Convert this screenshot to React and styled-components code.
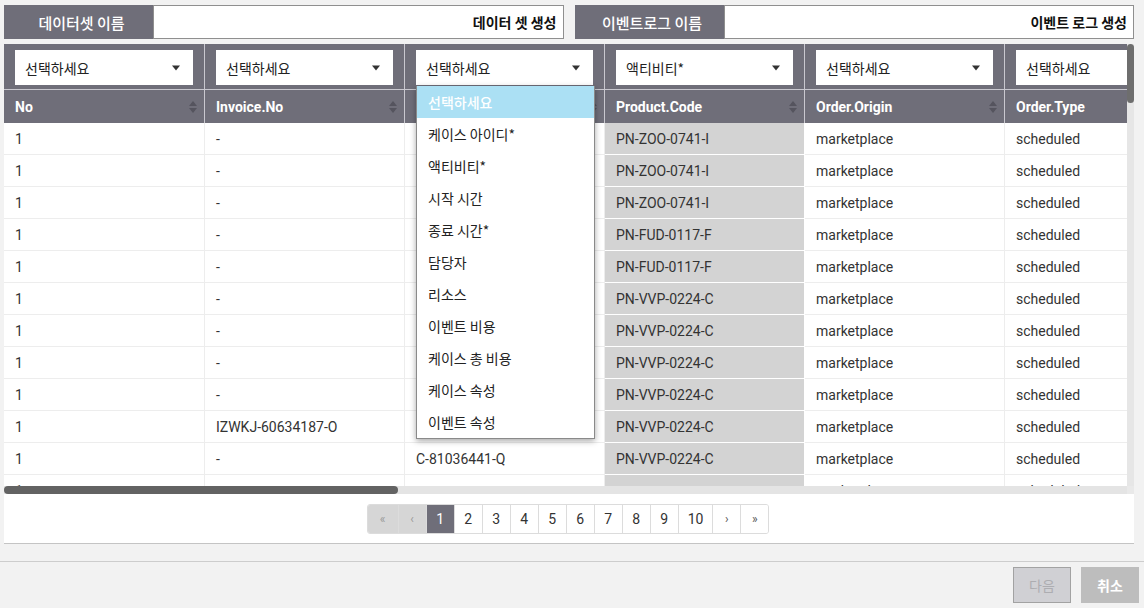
import React from 'react';
import styled, { createGlobalStyle } from 'styled-components';

const GlobalStyle = createGlobalStyle`
  html, body { margin: 0; padding: 0; background: #f2f2f2; }
  body { font-family: Roboto, "Noto Sans CJK KR", sans-serif; color: #333; }
  * { box-sizing: border-box; }
`;

const GRAY = '#6f6e79';

const Page = styled.div`
  min-height: 608px;
  background: #f2f2f2;
  display: flex;
  flex-direction: column;
`;

const Main = styled.div`
  padding: 5px 10px 0 4px;
`;

const TopBar = styled.div`
  display: flex;
  gap: 11px;
  height: 34px;
`;

const NameGroup = styled.div`
  flex: 1;
  display: flex;
`;

const NameLabel = styled.div`
  width: 149px;
  background: ${GRAY};
  color: #fff;
  font-family: "Noto Sans CJK KR", sans-serif;
  font-size: 15px;
  font-weight: 500;
  display: flex;
  align-items: center;
  justify-content: center;
  padding-left: 6px;
`;

const NameInput = styled.div`
  flex: 1;
  background: #fff;
  border: 1px solid #8f8f8f;
  display: flex;
  align-items: center;
  justify-content: flex-end;
  padding: 0 6px;
  font-family: "Noto Sans CJK KR", sans-serif;
  font-size: 14px;
  font-weight: 700;
  color: #111;
`;

const Panel = styled.div`
  margin-top: 5px;
  background: #fff;
  border-bottom: 1px solid #c4c4c4;
  height: 500px;
  display: flex;
  flex-direction: column;
`;

const TableFrame = styled.div`
  height: 450px;
  display: grid;
  grid-template-columns: minmax(0, 1fr) 7px;
  grid-template-rows: 442px 8px;
`;

const Viewport = styled.div`
  overflow: hidden;
  position: relative;
`;

const VTrack = styled.div`
  background: #e6e6e6;
  display: flex;
  flex-direction: column;
`;

const VThumb = styled.div`
  height: 59px;
  background: #6e6e6e;
  border-radius: 4px;
`;

const HTrack = styled.div`
  background: #e4e4e4;
  display: flex;
`;

const HThumb = styled.div`
  width: 394px;
  background: #636363;
  border-radius: 4px;
`;

const Corner = styled.div`
  background: #e9e9e9;
`;

const Table = styled.table`
  table-layout: fixed;
  border-collapse: separate;
  border-spacing: 0;
  width: ${p => p.$cols * 200 + 1}px;
`;

const FilterCell = styled.th`
  background: ${GRAY};
  height: 46px;
  padding: 6px 11px 0 11px;
  border-right: 1px solid #c9c8cf;
  border-bottom: 1px solid #c9c8cf;
  position: relative;
  vertical-align: top;
`;

const SelectBox = styled.div`
  height: 35px;
  background: #fff;
  display: flex;
  align-items: center;
  justify-content: space-between;
  padding: 0 13px 0 10px;
  font-family: "Noto Sans CJK KR", sans-serif;
  font-size: 14px;
  font-weight: 400;
  color: #222;
  text-align: left;
`;

const Dropdown = styled.ul`
  position: absolute;
  z-index: 10;
  left: 11px;
  top: 42px;
  width: 179px;
  margin: 0;
  padding: 0;
  list-style: none;
  background: #fff;
  border: 1px solid #8a8a8a;
  border-top: none;
  box-shadow: 0 2px 6px rgba(0, 0, 0, 0.35);
  text-align: left;
`;

const Option = styled.li`
  height: 32px;
  display: flex;
  align-items: center;
  padding-left: 11px;
  font-family: "Noto Sans CJK KR", sans-serif;
  font-size: 14px;
  font-weight: ${p => (p.$active ? 500 : 400)};
  color: ${p => (p.$active ? '#fff' : '#222')};
  background: ${p => (p.$active ? '#abe0f4' : '#fff')};
`;

const HeadCell = styled.th`
  background: ${GRAY};
  height: 33px;
  padding: 0 7px 0 11px;
  border-right: 1px solid #c9c8cf;
  color: #fff;
  font-size: 14px;
  font-weight: 700;
  text-align: left;
`;

const HeadInner = styled.div`
  display: flex;
  align-items: center;
  justify-content: space-between;
`;

const Cell = styled.td`
  height: 32px;
  padding: 0 11px;
  font-size: 14px;
  color: #333;
  white-space: nowrap;
  overflow: hidden;
  background: ${p => (p.$shade ? '#d3d3d3' : '#fff')};
  border-bottom: 1px solid ${p => (p.$shade ? '#fff' : '#ededed')};
  border-right: 1px solid ${p => (p.$shade ? '#fff' : '#ededed')};
`;

const PagerArea = styled.div`
  flex: 1;
  display: flex;
  justify-content: center;
  padding-top: 10px;
`;

const Pager = styled.div`
  display: flex;
  height: 30px;
  border: 1px solid #dcdcdc;
  border-radius: 3px;
  overflow: hidden;
  margin-right: 2px;
`;

const PageBtn = styled.div`
  min-width: ${p => (p.$wide ? 30 : 28)}px;
  padding: 0 9px;
  display: flex;
  align-items: center;
  justify-content: center;
  font-size: ${p => (p.$arrow ? '12px' : '14px')};
  color: ${p => (p.$active ? '#fff' : p.$disabled ? '#9a9a9a' : p.$arrow ? '#555' : '#333')};
  background: ${p => (p.$active ? GRAY : p.$disabled ? '#d6d6d6' : '#fff')};
  border-left: ${p => (p.$first ? 'none' : '1px solid #dcdcdc')};
`;

const Footer = styled.div`
  margin-top: 17px;
  border-top: 1px solid #cdcdcd;
  display: flex;
  justify-content: flex-end;
  gap: 10px;
  padding: 5px 5px 0 0;
`;

const FooterBtn = styled.button`
  width: 58px;
  height: 36px;
  font-family: "Noto Sans CJK KR", sans-serif;
  font-size: 14px;
  font-weight: ${p => (p.$disabled ? 400 : 700)};
  color: ${p => (p.$disabled ? '#adadb1' : '#fff')};
  background: ${p => (p.$disabled ? '#d0d0d4' : '#bdbdbd')};
  border: ${p => (p.$disabled ? '1px solid #a2a2a2' : 'none')};
  padding: 0;
`;

const Caret = () => (
  <svg width="8" height="6" viewBox="0 0 8 6"><path d="M0 0.5h8L4 5.5z" fill="#333" /></svg>
);

const SortIcon = () => (
  <svg width="8" height="14" viewBox="0 0 8 14">
    <path d="M0 6L4 1l4 5z" fill="#55545e" />
    <path d="M0 8l4 5 4-5z" fill="#55545e" />
  </svg>
);

const columns = [
  'No', 'Invoice.No', 'Order.No', 'Product.Code', 'Order.Origin', 'Order.Type',
  'Order.Date', 'Order.Status', 'Customer.ID', 'Customer.Type', 'Payment.Method',
  'Shipping.Type', 'Warehouse', 'Quantity', 'Unit.Price', 'Total.Price',
];

const filters = columns.map((_, i) => (i === 3 ? '액티비티*' : '선택하세요'));

const options = [
  '선택하세요', '케이스 아이디*', '액티비티*', '시작 시간', '종료 시간*', '담당자',
  '리소스', '이벤트 비용', '케이스 총 비용', '케이스 속성', '이벤트 속성',
];

const productFor = i =>
  i < 3 ? 'PN-ZOO-0741-I' : i < 5 ? 'PN-FUD-0117-F' : i < 11 ? 'PN-VVP-0224-C' : '';

const rows = Array.from({ length: 13 }, (_, i) => [
  '1',
  i === 9 ? 'IZWKJ-60634187-O' : '-',
  i === 10 ? 'C-81036441-Q' : i < 10 ? 'C-81036441-Q' : '',
  productFor(i),
  'marketplace',
  'scheduled',
  '2021-03-0' + ((i % 9) + 1),
  'completed',
  'CU-' + (1000 + i),
  'retail',
  'card',
  'standard',
  'WH-0' + ((i % 5) + 1),
  String((i % 7) + 1),
  '12.50',
  String(((i % 7) + 1) * 12.5),
]);

export default function App() {
  return (
    <Page>
      <GlobalStyle />
      <Main>
        <TopBar>
          <NameGroup>
            <NameLabel>데이터셋 이름</NameLabel>
            <NameInput>데이터 셋 생성</NameInput>
          </NameGroup>
          <NameGroup>
            <NameLabel>이벤트로그 이름</NameLabel>
            <NameInput>이벤트 로그 생성</NameInput>
          </NameGroup>
        </TopBar>
        <Panel>
          <TableFrame>
            <Viewport>
              <Table $cols={columns.length}>
                <colgroup>
                  {columns.map((c, i) => <col key={c} style={{ width: i === 0 ? 201 : 200 }} />)}
                </colgroup>
                <thead>
                  <tr>
                    {filters.map((f, i) => (
                      <FilterCell key={i}>
                        <SelectBox>
                          <span>{f}</span>
                          <Caret />
                        </SelectBox>
                        {i === 2 && (
                          <Dropdown>
                            {options.map((o, k) => (
                              <Option key={o} $active={k === 0}>{o}</Option>
                            ))}
                          </Dropdown>
                        )}
                      </FilterCell>
                    ))}
                  </tr>
                  <tr>
                    {columns.map(c => (
                      <HeadCell key={c}>
                        <HeadInner>
                          <span>{c}</span>
                          <SortIcon />
                        </HeadInner>
                      </HeadCell>
                    ))}
                  </tr>
                </thead>
                <tbody>
                  {rows.map((r, i) => (
                    <tr key={i}>
                      {r.map((v, j) => (
                        <Cell key={j} $shade={j === 3}>{v}</Cell>
                      ))}
                    </tr>
                  ))}
                </tbody>
              </Table>
            </Viewport>
            <VTrack><VThumb /></VTrack>
            <HTrack><HThumb /></HTrack>
            <Corner />
          </TableFrame>
          <PagerArea>
            <Pager>
              <PageBtn $first $disabled $arrow $wide>«</PageBtn>
              <PageBtn $disabled $arrow>‹</PageBtn>
              <PageBtn $active>1</PageBtn>
              {[2, 3, 4, 5, 6, 7, 8, 9, 10].map(n => <PageBtn key={n}>{n}</PageBtn>)}
              <PageBtn $arrow>›</PageBtn>
              <PageBtn $arrow>»</PageBtn>
            </Pager>
          </PagerArea>
        </Panel>
      </Main>
      <Footer>
        <FooterBtn $disabled>다음</FooterBtn>
        <FooterBtn>취소</FooterBtn>
      </Footer>
    </Page>
  );
}
